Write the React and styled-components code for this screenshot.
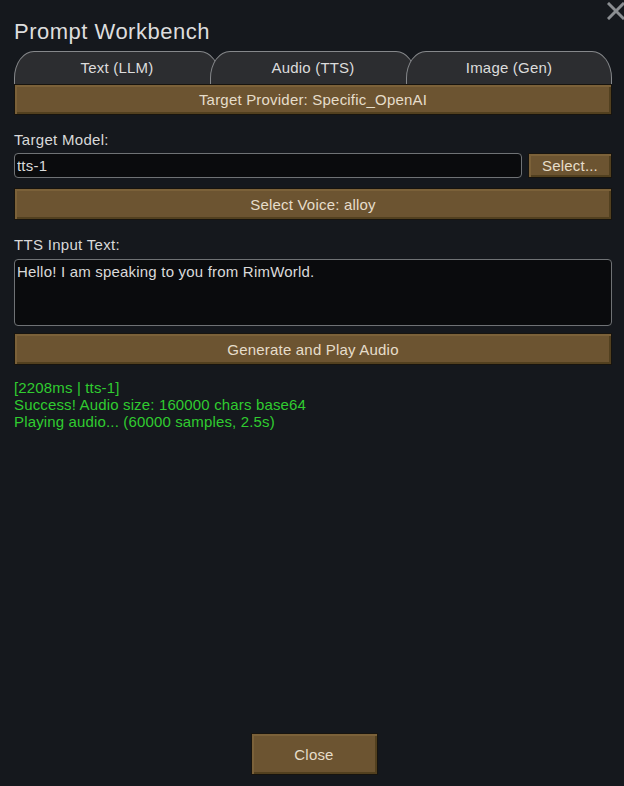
import React from 'react';
import styled, { createGlobalStyle } from 'styled-components';

const GlobalStyle = createGlobalStyle`
  html, body {
    margin: 0;
    padding: 0;
    background: #15181d;
  }
  body {
    font-family: "Liberation Sans", Arial, sans-serif;
  }
`;

const Window = styled.div`
  position: relative;
  box-sizing: border-box;
  width: 624px;
  height: 786px;
  padding: 19px 12px 11px 14px;
  display: flex;
  flex-direction: column;
  background: #15181d;
  color: #d9d9d9;
  overflow: hidden;
`;

const CloseX = styled.button`
  position: absolute;
  top: 2px;
  right: -1px;
  width: 18px;
  height: 18px;
  padding: 0;
  border: 0;
  background: none;
  cursor: pointer;
`;

const Title = styled.h1`
  margin: 0;
  font-size: 22px;
  line-height: 26px;
  font-weight: 400;
  letter-spacing: 0.5px;
  color: #dddddd;
`;

const TabBar = styled.div`
  display: flex;
  margin-top: 6px;
  height: 33px;
`;

const Tab = styled.div`
  box-sizing: border-box;
  flex: 1;
  margin-left: ${p => (p.$first ? '0' : '-10px')};
  display: flex;
  align-items: center;
  justify-content: center;
  padding-bottom: 2px;
  background: #2c2d30;
  border: 1px solid #86888b;
  border-bottom: 0;
  border-radius: 20px 20px 0 0 / 27px 27px 0 0;
  font-size: 15px;
  letter-spacing: 0.2px;
  color: #dcdcdc;
`;

const Button = styled.button`
  box-sizing: border-box;
  width: ${p => p.$width || '100%'};
  height: ${p => p.$height || '32px'};
  margin-top: ${p => p.$gap || '0'};
  padding: 0 8px;
  flex-shrink: 0;
  font-family: "Liberation Sans", Arial, sans-serif;
  font-size: 15px;
  letter-spacing: 0.2px;
  color: #e6ddca;
  background: #6c5431;
  border: 1px solid #17140f;
  box-shadow:
    inset 2px 2px 0 #7b6139,
    inset -2px -2px 0 #52401f;
  cursor: pointer;
`;

const Label = styled.div`
  margin-top: ${p => p.$gap || '16px'};
  font-size: 15px;
  line-height: 18px;
  letter-spacing: 0.3px;
  color: #d9d9d9;
`;

const FieldRow = styled.div`
  display: flex;
  gap: 6px;
  margin-top: 4px;
  height: 25px;
`;

const TextInput = styled.input`
  box-sizing: border-box;
  flex: 1;
  min-width: 0;
  height: 25px;
  padding: 0 2px;
  font-family: "Liberation Sans", Arial, sans-serif;
  font-size: 15px;
  letter-spacing: 0.2px;
  color: #dadada;
  background: #0a0b0d;
  border: 1px solid #6f7275;
  border-radius: 4px;
  outline: none;
`;

const TextArea = styled.textarea`
  box-sizing: border-box;
  display: block;
  width: 100%;
  height: 67px;
  margin-top: 5px;
  padding: 3px 2px;
  font-family: "Liberation Sans", Arial, sans-serif;
  font-size: 15px;
  line-height: 18px;
  letter-spacing: 0.2px;
  color: #dadada;
  background: #0a0b0d;
  border: 1px solid #6f7275;
  border-radius: 4px;
  resize: none;
  outline: none;
`;

const Log = styled.div`
  margin-top: 14px;
  font-size: 15px;
  line-height: 17px;
  letter-spacing: 0.15px;
  color: #30cc30;
`;

const Footer = styled.div`
  margin-top: auto;
  display: flex;
  justify-content: center;
  padding-left: 2px;
`;

const logLines = [
  '[2208ms | tts-1]',
  'Success! Audio size: 160000 chars base64',
  'Playing audio... (60000 samples, 2.5s)',
];

export default function App() {
  return (
    <>
      <GlobalStyle />
      <Window>
        <CloseX aria-label="Close">
          <svg width="18" height="18" viewBox="0 0 18 18">
            <path d="M2 2 L16 16 M16 2 L2 16" stroke="#8b8e92" strokeWidth="3" strokeLinecap="square" />
          </svg>
        </CloseX>

        <Title>Prompt Workbench</Title>

        <TabBar>
          <Tab $first>Text (LLM)</Tab>
          <Tab>Audio (TTS)</Tab>
          <Tab>Image (Gen)</Tab>
        </TabBar>

        <Button $height="31px">Target Provider: Specific_OpenAI</Button>

        <Label>Target Model:</Label>
        <FieldRow>
          <TextInput defaultValue="tts-1" />
          <Button $width="84px" $height="25px">Select...</Button>
        </FieldRow>

        <Button $gap="10px">Select Voice: alloy</Button>

        <Label>TTS Input Text:</Label>
        <TextArea defaultValue="Hello! I am speaking to you from RimWorld." />

        <Button $gap="7px">Generate and Play Audio</Button>

        <Log>
          {logLines.map(line => (
            <div key={line}>{line}</div>
          ))}
        </Log>

        <Footer>
          <Button $width="127px" $height="42px">Close</Button>
        </Footer>
      </Window>
    </>
  );
}
